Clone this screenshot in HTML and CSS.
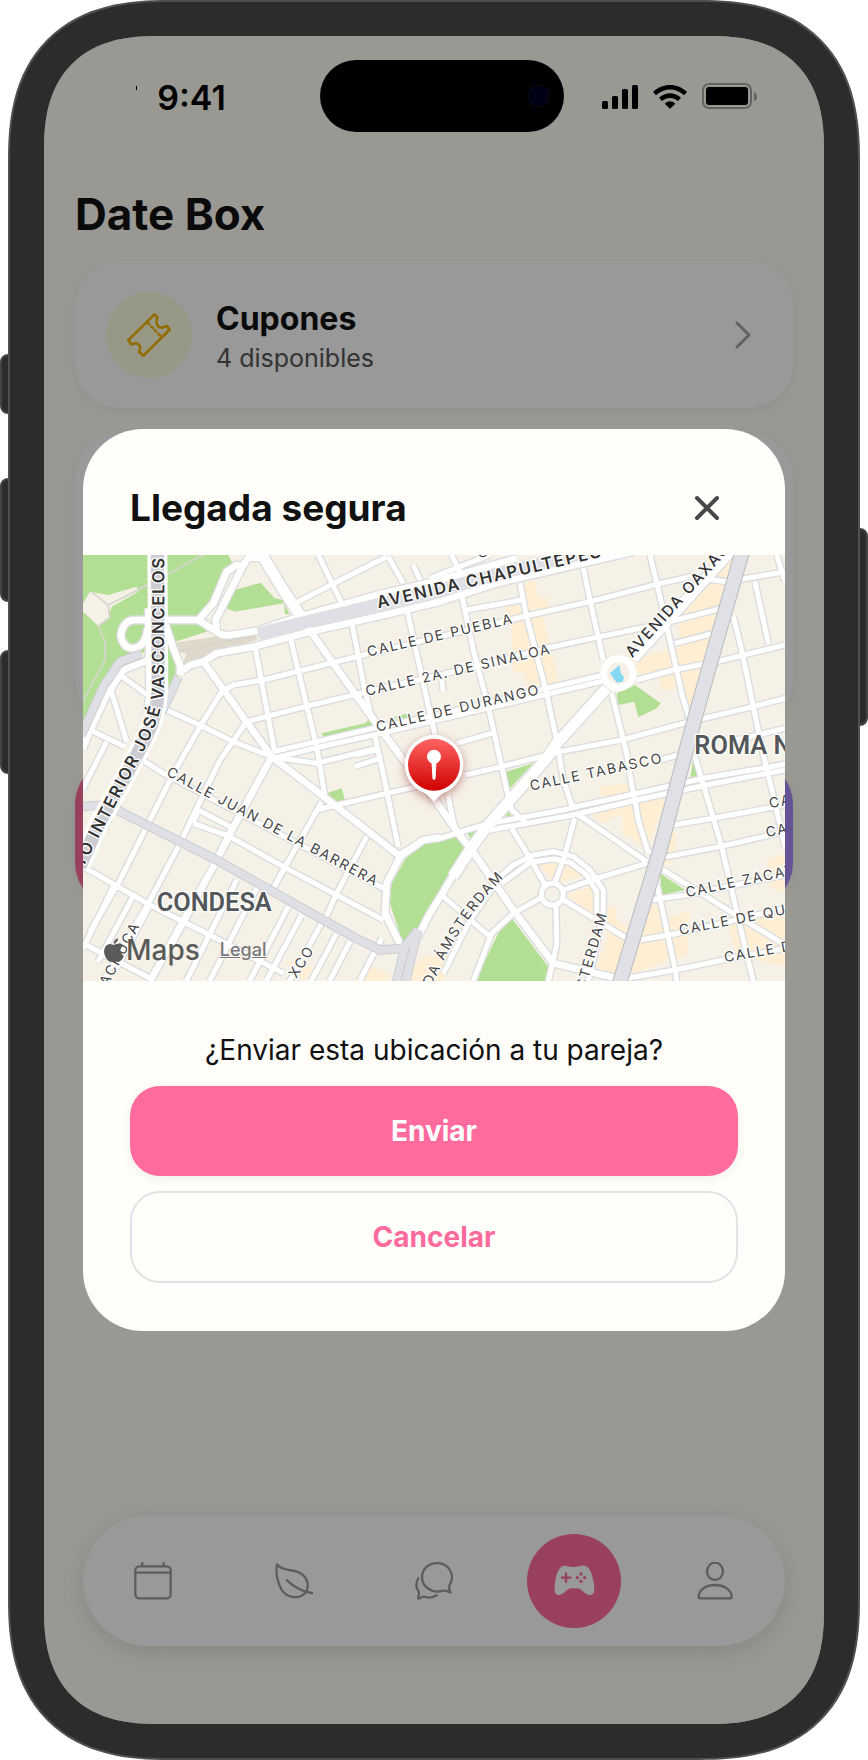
FILE: index.html
```
<!DOCTYPE html>
<html lang="es">

<head>
    <meta charset="UTF-8">
    <meta name="viewport" content="width=device-width, initial-scale=1.0">
    <title>Date Box</title>
    <link rel="stylesheet" href="styles.css">
</head>

<body>
    <div class="phone">
        <span class="side-button action"></span>
        <span class="side-button volume-up"></span>
        <span class="side-button volume-down"></span>
        <span class="side-button power"></span>

        <div class="screen">
            <header class="status-bar">
                <div class="time">9:41</div>
                <div class="island"><span class="camera"></span></div>
                <div class="status-icons">
                    <svg width="36" height="26" viewBox="0 0 36 26">
                        <rect x="0" y="18" width="6" height="8" rx="1.5" />
                        <rect x="10" y="13" width="6" height="13" rx="1.5" />
                        <rect x="20" y="6" width="6" height="20" rx="1.5" />
                        <rect x="30" y="2" width="6" height="24" rx="1.5" />
                    </svg>
                    <svg width="34" height="26" viewBox="0 0 102 78">
                        <path d="M0 27C28-1 74-1 102 27L93 37C68 14 34 14 9 37Z" />
                        <path d="M18 44C37 26 65 26 84 44L75 54C60 42 42 42 27 54Z" />
                        <path d="M35 62Q51 48 67 62L51 77Z" />
                    </svg>
                    <svg width="55" height="26" viewBox="0 0 55 26">
                        <rect x="1" y="1" width="48" height="24" rx="6" fill="none" stroke="#a6a6a3" stroke-width="2" />
                        <rect x="4" y="4" width="42" height="18" rx="3" />
                        <path d="M52 9Q55 10 55 14T52 18Z" fill="#a6a6a3" />
                    </svg>
                </div>
            </header>

            <main class="content">
                <h1>Date Box</h1>
                <a class="card coupon-card" href="#cupones">
                    <span class="card-icon">
                        <svg width="44" height="44" viewBox="380 938 133 133" fill="none" stroke="#f5b400" stroke-width="8" stroke-linejoin="round" stroke-linecap="round">
                            <path d="M463 942L472 952C466 964 470 975 477 980C484 985 493 981 500 977L509 988L430 1067L416 1055C423 1045 420 1036 414 1032C407 1028 399 1030 393 1033L384 1020Z" />
                            <path d="M441 966L447 972M454 979L458 983M464 990L468 994M475 1001L481 1007" />
                        </svg>
                    </span>
                    <span class="card-text">
                        <strong>Cupones</strong>
                        <small>4 disponibles</small>
                    </span>
                    <svg class="chevron" width="18" height="28" viewBox="0 0 18 28" fill="none" stroke="#a3a3a3" stroke-width="3" stroke-linecap="round" stroke-linejoin="round">
                        <path d="M3 2L15 14L3 26" />
                    </svg>
                </a>
                <div class="card tall-card"></div>
                <div class="card gradient-card"></div>
            </main>

            <nav class="tab-bar">
                <a href="#calendario" aria-label="Calendario">
                    <svg width="38" height="38" viewBox="193 245 114 114">
                        <rect x="197" y="258" width="106" height="96" rx="12" />
                        <path d="M197 277H303M218 248V257M282 248V257" />
                    </svg>
                </a>
                <a href="#bienestar" aria-label="Bienestar">
                    <svg width="38" height="38" viewBox="614 245 114 114">
                        <path d="M620 252C638 275 666 265 689 278C714 292 718 320 705 337C688 357 652 354 635 330C620 307 616 275 620 252Z" />
                        <path d="M650 300Q685 333 725 338" />
                    </svg>
                </a>
                <a href="#chat" aria-label="Chat">
                    <svg width="38" height="38" viewBox="1035 245 114 114">
                        <path d="M1141 336C1135 336 1128 327 1114 332C1084 340 1056 318 1056 291C1056 266 1076 248 1101 248C1127 248 1146 268 1146 291C1146 310 1136 312 1137 321C1137 328 1141 332 1141 336Z" />
                        <path d="M1045 294C1035 310 1040 325 1046 334C1050 342 1042 350 1045 355C1055 354 1055 346 1068 350C1080 354 1092 350 1100 345" />
                    </svg>
                </a>
                <a class="active" href="#juegos" aria-label="Juegos">
                    <svg width="41" height="31" viewBox="344 256 123 93">
                        <path class="pad" d="M375 258C385 258 392 262 405 262C418 262 425 257 435 258C452 260 460 285 464 315C467 340 463 347 450 346C435 345 430 326 412 326H398C380 326 376 345 360 346C346 347 344 335 347 310C350 285 358 260 375 258Z" />
                        <path class="pad-cross" d="M368 294H393M380 282V306" />
                        <g class="pad-dots">
                            <circle cx="425" cy="283" r="5" />
                            <circle cx="425" cy="305" r="5" />
                            <circle cx="414" cy="294" r="5" />
                            <circle cx="436" cy="294" r="5" />
                        </g>
                    </svg>
                </a>
                <a href="#perfil" aria-label="Perfil">
                    <svg width="38" height="38" viewBox="769 245 114 114">
                        <ellipse cx="826" cy="273" rx="24" ry="26" />
                        <path d="M777 350C777 326 802 314 826 314C850 314 876 326 876 350Q876 354 872 354H781Q777 354 777 350Z" />
                    </svg>
                </a>
            </nav>

            <div class="overlay">
                <section class="modal" role="dialog" aria-labelledby="modalTitle">
                    <div class="modal-header">
                        <h2 id="modalTitle">Llegada segura</h2>
                        <button class="close-button" type="button" aria-label="Cerrar">
                            <svg width="26" height="26" viewBox="0 0 26 26" fill="none" stroke="#484848" stroke-width="4" stroke-linecap="round">
                                <path d="M3 3L23 23M23 3L3 23" />
                            </svg>
                        </button>
                    </div>

                    <div class="map">
                        <svg class="map-drawing" viewBox="0 0 2106 1278" preserveAspectRatio="xMidYMid slice">
                            <defs>
                                <!-- calles secundarias -->
                                <g id="streets">
                                    <path d="M636 145L911 5M706 0L781 155M806 200L841 385L861 470M876 545L896 635L946 875" />
                                    <path d="M916 5L961 85M971 160L1041 475L1061 560M991 30L1011 75M1106 0L1136 65M1041 70L1131 35L1220 0" />
                                    <path d="M416 410L451 390L541 375L821 305L1071 245L1341 180L1521 140L1721 88L1821 65L1931 80L2106 50" />
                                    <path d="M491 500L666 455L811 420L1071 360L1411 275L1551 245L1741 205L1916 160" />
                                    <path d="M571 590L701 560L881 518L1071 478L1391 400L1561 360" />
                                    <path d="M571 610L701 578L881 538L1071 493L1391 418L1561 378" />
                                    <path d="M1661 375L1771 345L1901 320L2106 270M1776 265L1891 235M1151 165L1316 135M1076 375L1081 410" />
                                    <path d="M701 765L911 715L1001 695M1146 660L1256 635L1431 590L1616 555L1821 500L2011 455L2106 430" />
                                    <path d="M1121 565L1226 535M1731 615L1786 600M1960 555L2106 520M816 600L880 585M816 635L890 610" />
                                    <path d="M946 900L1021 855L1071 850L1151 825L1221 805L1441 765L1481 755L1641 720L1861 670L2106 628" />
                                    <path d="M1221 825L1471 780L1661 735L1871 690L2106 645" />
                                    <path d="M1771 810L1891 790L2106 750M1701 890L1751 905L1911 875L2106 830M1701 1035L1811 1020L2106 960" />
                                    <path d="M1671 1155L1786 1135L2106 1060M1631 1270L1776 1245L1921 1215L2106 1180" />
                                    <path d="M1481 775L1691 920M1741 945L1871 1025L1951 1075L2106 1170" />
                                    <path d="M1721 985L1776 1240L1781 1278M1836 605L1891 790L1916 875L1981 1155L2011 1278" />
                                    <path d="M1951 185L1976 285L2011 455L2041 600L2061 680L2106 875M2016 80L2056 265M2081 0L2106 80" />
                                    <path d="M1701 0L1731 125L1781 345L1796 415L1821 500M1501 40L1521 135L1561 315" />
                                    <path d="M1586 415L1631 595L1646 690L1656 735L1666 795L1696 895" />
                                    <path d="M1311 85L1331 185L1386 395L1421 555L1441 675L1466 750L1486 758" />
                                    <path d="M1136 120L1171 285L1216 455L1256 635L1271 705L1286 765L1331 805" />
                                    <path d="M1095 720L1115 820" />
                                    <path d="M1081 1255L1156 1105L1251 965L1291 930L1351 900L1411 890L1471 905L1521 945L1561 1005L1561 1065L1531 1215L1515 1278" />
                                    <path d="M1256 985L1341 922L1411 912L1461 922L1511 960L1541 1010L1541 1075" />
                                    <path d="M1386 990L1341 910L1286 820M1415 985L1446 900L1475 790M1441 1005L1541 970L1691 925M1441 1035L1541 1095L1631 1150" />
                                    <path d="M1419 1055L1421 1165L1411 1215L1396 1278M1371 1030L1291 1075L1226 1135L1171 1278M1081 1025L1221 1145" />
                                    <circle cx="1408" cy="1018" r="33" />
                                    <path d="M516 275L575 590M621 245L701 575L726 725M251 465L361 515L451 560L566 605M111 360L201 425" />
                                    <path d="M416 410L351 515L271 655L191 815L106 985L21 1130M491 500L411 615L286 875L196 1045L60 1278" />
                                    <path d="M716 740L601 945L571 1000M851 845L761 1015L721 1105M261 1180L441 845" />
                                    <path d="M0 935L201 1050L361 1130L601 1255M0 1165L211 1275M331 805L441 845L601 935L901 1095M346 765L441 815M331 805L346 765" />
                                    <path d="M171 610L241 655L901 1000M566 605L700 625L881 580" />
                                    <path d="M461 975L310 1278M521 1000L380 1278M616 1055L500 1278M656 1080L550 1278M716 1105L620 1278M761 1135L685 1278M801 1160L740 1278" />
                                    <path d="M96 985L0 1180M155 1015L45 1220M81 395L131 560M21 525L126 575M71 560L0 700M201 1050L100 1240" />
                                    <path d="M896 1150L830 1278" />
                                </g>
                                <!-- avenidas y rampas -->
                                <g id="avenues">
                                    <path d="M196 195H151Q121 198 113 240Q120 280 150 280Q190 275 193 220" />
                                    <path d="M196 195H346L401 230Q415 242 441 240L521 228L651 185L881 120L1071 75L1300 10" />
                                    <path d="M346 195L391 145L431 50L461 30L481 35M401 225L398 195L481 30L496 8H531" />
                                    <path d="M296 350L321 330L361 320L401 295L511 275L681 230L881 185L1071 140L1241 85L1650 -10" />
                                    <path d="M361 320L566 605L761 755L946 900" />
                                    <path d="M566 605L441 835L391 935L201 1278" />
                                    <path d="M651 185L851 465L950 600L1056 735L1126 835L1166 885L1291 1065L1411 1225L1601 1270" />
                                    <path d="M1071 848L1021 855L951 905L911 985L906 1075L955 1175M1115 955L1041 1075L1005 1145" />
                                    <path d="M246 205L271 280L291 330V360M196 315L121 345L71 420L15 540L0 580M196 160L200 420L190 480" />
                                </g>
                                <g id="wide">
                                    <path d="M531 -10L601 105L651 180" />
                                    <path d="M1941 -10L1651 310M1571 400L1421 565L1391 610L1211 815L1161 885L1110 965" />
                                </g>
                                <g id="highways">
                                    <path d="M1978 -10L1906 240L1841 470L1795 640L1731 885L1608 1290" />
                                </g>
                                <g id="trunks">
                                    <path d="M-10 755L95 748L111 770L401 915L561 1005L721 1095L820 1150L891 1185L961 1180L1005 1125" />
                                    <path d="M965 1180L938 1290M176 297L111 320L61 395L-5 540M286 365L251 440L171 600L20 900M1005 1125L965 1290" />
                                </g>
                                <path id="vasconcelosLine" d="M-220 1390L20 900L160 630Q238 490 243 400L244 4" />
                                <path id="amsterdamLine" d="M900 1600L1090 1200Q1160 1070 1265 965" />
                            </defs>

                            <rect class="land" width="2106" height="1278" />
                            <g class="park">
                                <path d="M0 0H436L451 30L411 85L346 195L371 230L261 265L300 330L260 420L196 285L111 325L61 395L0 515Z" />
                                <path d="M431 160L456 105L533 83L575 130L601 135V145L456 170ZM603 145L620 178H606Z" />
                                <path d="M1601 415L1656 390L1733 445L1721 460L1666 487L1654 440L1606 450Z" />
                                <path d="M1121 840L1146 885L1091 965L1041 1055L1010 1120L961 1170L921 1045L926 985L971 905L1021 865L1071 855Z" />
                                <path d="M1286 1090L1396 1235L1386 1278H1176L1246 1135Z" />
                                <path d="M1271 650L1351 625L1276 705ZM1151 832L1211 820L1171 865ZM1821 675L1831 610L1851 670ZM1731 955L1806 1005L1736 1020ZM1275 770L1291 790H1266Z" />
                                <path d="M716 535L846 505L866 485V515L721 550ZM731 715L776 700L786 735L706 760ZM925 490L975 475V490ZM965 1190L995 1180L970 1215Z" />
                            </g>
                            <path class="land" d="M0 145L21 110L76 120L161 95L166 110L86 155L76 190L46 213L0 170Z" />
                            <path class="park-path" d="M25 110L76 150L165 105L190 90M165 105L360 0M76 150L80 188L46 213L66 260V315L0 440" />
                            <path class="rail" d="M261 265L521 228V255L391 290L340 330L296 340L310 295L262 290Z" />
                            <path class="rail-line" d="M290 290L521 240" />
                            <g class="shops">
                                <path d="M1326 80H1356L1366 130L1396 127L1401 155L1381 185L1426 380L1331 395L1326 355L1291 350L1286 225L1266 155L1316 150Z" />
                                <path d="M1941 5L1950 30L1821 460L1801 405H1730L1728 365L1665 358L1655 310L1790 275L1786 195Z" />
                                <path d="M1551 695L1641 685L1656 735L1756 715L1691 885L1641 845H1621L1616 775L1561 805L1521 775L1560 760Z" />
                                <path d="M1731 835H1781L1771 915L1731 940ZM1361 925L1411 915L1505 960L1415 985ZM1451 1020L1531 990L1536 1085Z" />
                                <path d="M1571 1055H1601V1095L1631 1115L1681 1045L1731 1055L1741 1095L1821 1065L1811 1205L1761 1215L1600 1278L1541 1235L1571 1155Z" />
                                <path d="M2051 915L2106 895V1010L2061 1000ZM1931 1095L2106 1055V1235L1961 1200ZM1021 1205L1100 1195L1081 1278H950ZM811 1278L850 1225L921 1260V1278ZM601 1212L691 1240L661 1278Z" />
                            </g>

                            <use href="#streets" class="road street-edge" />
                            <use href="#avenues" class="road avenue-edge" />
                            <use href="#wide" class="road wide-edge" />
                            <use href="#streets" class="road street" />
                            <use href="#avenues" class="road avenue" />
                            <use href="#wide" class="road wide" />
                            <circle class="roundabout" cx="1606" cy="355" r="44" />
                            <path class="water" d="M1581 355L1609 330L1613 353L1623 367L1619 380L1601 383Z" />
                            <use href="#trunks" class="road trunk-edge" />
                            <use href="#trunks" class="road trunk" />
                            <use href="#highways" class="road highway-edge" />
                            <use href="#highways" class="road highway" />
                            <path class="road chapultepec" d="M525 236L651 205L881 150L1071 105L1291 45L1541 -15" />
                            <path class="road vasconcelos-edge" d="M223 -10L226 405Q222 480 190 545L130 660L51 800L-10 935" />
                            <path class="road vasconcelos" d="M223 -10L226 405Q222 480 190 545L130 660L51 800L-10 935" />

                            <g class="label">
                                <text transform="translate(856 305) rotate(-13)">CALLE DE PUEBLA</text>
                                <text transform="translate(851 423) rotate(-13)">CALLE 2A. DE SINALOA</text>
                                <text transform="translate(883 530) rotate(-13)">CALLE DE DURANGO</text>
                                <text transform="translate(1344 707) rotate(-12)">CALLE TABASCO</text>
                                <text transform="translate(248 660) rotate(28)">CALLE JUAN DE LA BARRERA</text>
                                <text transform="translate(1811 1027) rotate(-12)">CALLE ZACATECAS</text>
                                <text transform="translate(1791 1140) rotate(-11)">CALLE DE QUERÉTARO</text>
                                <text transform="translate(1926 1222) rotate(-10)">CALLE DURANGO</text>
                                <text transform="translate(2061 760) rotate(-11)">CALLE</text>
                                <text transform="translate(2051 847) rotate(-11)">CALLE</text>
                                <text transform="translate(1190 12) rotate(-25)">CALLE</text>
                                <text transform="translate(640 1272) rotate(-58)">XCO</text>
                                <text transform="translate(172 1110) rotate(-62)" text-anchor="end">PACHUCA</text>
                                <text transform="translate(1573 1075) rotate(-74)" text-anchor="end">AVENIDA ÁMSTERDAM</text>
                                <text text-anchor="end"><textPath href="#amsterdamLine" startOffset="100%">AVENIDA ÁMSTERDAM</textPath></text>
                            </g>
                            <g class="label label-avenue">
                                <text transform="translate(886 160) rotate(-13)">AVENIDA CHAPULTEPEC</text>
                                <text text-anchor="end"><textPath href="#vasconcelosLine" startOffset="100%">CIRCUITO INTERIOR JOSÉ VASCONCELOS</textPath></text>
                            </g>
                            <g class="label label-diagonal">
                                <text transform="translate(1648 310) rotate(-48)">AVENIDA OAXACA</text>
                            </g>
                            <g class="label label-district">
                                <text x="221" y="1068">CONDESA</text>
                                <text x="1834" y="597">ROMA NORTE</text>
                            </g>
                        </svg>

                        <svg class="pin" width="84" height="92" viewBox="0 0 84 92">
                            <defs>
                                <linearGradient id="pinRed" x1="0" y1="0" x2="0" y2="1">
                                    <stop offset="0" stop-color="#ff6464" />
                                    <stop offset="1" stop-color="#d00000" />
                                </linearGradient>
                            </defs>
                            <path d="M42 9A30 30 0 0 1 52 67Q48 69 42 76Q36 69 32 67A30 30 0 0 1 42 9Z" fill="#fff" />
                            <circle cx="42" cy="39" r="26" fill="url(#pinRed)" />
                            <circle cx="42" cy="31" r="7" fill="#fff" />
                            <path d="M40 37H44L43 53Q42 55 41 53Z" fill="#fff" stroke="#fff" />
                        </svg>

                        <div class="map-credit">
                            <svg width="20" height="24" viewBox="0 0 20 24">
                                <path d="M14 0Q14 4 10 6Q9 2 14 0ZM10 7Q13 5 16 6Q18 7 19 8Q15 11 17 15Q18 17 20 18Q18 22 15 24Q13 24 10 23Q7 24 6 24Q0 20 0 13Q1 6 6 6Z" />
                            </svg>
                            <span>Maps</span>
                            <a href="#legal">Legal</a>
                        </div>
                    </div>

                    <div class="modal-body">
                        <p>¿Enviar esta ubicación a tu pareja?</p>
                        <button class="btn btn-primary" type="button">Enviar</button>
                        <button class="btn btn-outline" type="button">Cancelar</button>
                    </div>
                </section>
            </div>
        </div>
    </div>
</body>

</html>
```
FILE: styles.css
```
* {
    box-sizing: border-box;
}

body {
    margin: 0;
    padding: 0 8px;
    background-color: #fff;
    font-family: Inter, "Liberation Sans", sans-serif;
    color: #111;
}

h1,
h2,
p {
    margin: 0;
}

/* Marco del teléfono */
.phone {
    position: relative;
    display: flex;
    min-height: 100vh;
    padding: 34px;
    border: 2px solid #505050;
    border-radius: 140px;
    background-color: #2c2c2c;
}

.side-button {
    position: absolute;
    z-index: -1;
    left: -10px;
    width: 20px;
    border: 2px solid #444;
    border-radius: 8px;
    background-color: #2c2c2c;
}

.action {
    top: 352px;
    height: 60px;
}

.volume-up {
    top: 476px;
    height: 124px;
}

.volume-down {
    top: 648px;
    height: 124px;
}

.power {
    top: 526px;
    right: -10px;
    left: auto;
    height: 198px;
}

.screen {
    position: relative;
    display: flex;
    flex: 1;
    flex-direction: column;
    border-radius: 96px;
    overflow: hidden;
    background-color: #fffef5;
}

@supports (corner-shape: squircle) {
    .phone {
        border-radius: 160px;
        corner-shape: superellipse(1.3);
    }

    .screen {
        border-radius: 114px;
        corner-shape: superellipse(1.3);
    }
}

/* Barra de estado */
.status-bar {
    display: grid;
    grid-template-columns: minmax(0, 1fr) 244px minmax(0, 1fr);
    align-items: center;
    padding: 24px 0 0 16px;
}

.time {
    padding: 2px 18px 0 0;
    text-align: center;
    font-size: 34px;
    font-weight: 600;
    color: #000;
}

.time::before {
    content: "";
    display: inline-block;
    width: 1px;
    height: 4px;
    margin-right: 20px;
    vertical-align: 20px;
    background-color: #000;
}

.island {
    display: flex;
    align-items: center;
    justify-content: flex-end;
    height: 72px;
    padding-right: 14px;
    border-radius: 36px;
    background-color: #000;
}

.camera {
    width: 22px;
    height: 22px;
    border: 1px solid #14142c;
    border-radius: 50%;
    background-color: #000024;
}

.status-icons {
    display: flex;
    gap: 15px;
    padding-left: 38px;
}

/* Contenido */
.content {
    display: flex;
    flex-direction: column;
    gap: 21px;
    padding: 56px 31px 0;
}

h1 {
    font-size: 44px;
    font-weight: 700;
    line-height: 52px;
}

.card {
    border-radius: 44px;
    background-color: #fff;
    box-shadow: 0 3px 12px rgba(0, 0, 0, 0.06);
}

.coupon-card {
    display: flex;
    align-items: center;
    gap: 24px;
    height: 147px;
    padding: 0 31px;
    color: #111;
    text-decoration: none;
}

.card-icon {
    display: flex;
    align-items: center;
    justify-content: center;
    width: 86px;
    height: 86px;
    border-radius: 50%;
    background-color: #fdfde2;
}

.card-text {
    display: flex;
    flex: 1;
    flex-direction: column;
    gap: 4px;
    padding-top: 2px;
}

.card-text strong {
    font-size: 32px;
    font-weight: 700;
    line-height: 40px;
}

.card-text small {
    font-size: 25px;
    line-height: 30px;
    color: #555;
}

.chevron {
    margin-right: 10px;
}

.tall-card {
    height: 291px;
    margin-top: 4px;
}

.gradient-card {
    height: 147px;
    margin-top: 15px;
    background: linear-gradient(90deg, #ff6b9d, #a78bfa);
}

/* Navegación inferior */
.tab-bar {
    display: grid;
    grid-template-columns: repeat(5, 1fr);
    align-items: center;
    justify-items: center;
    height: 131px;
    margin: auto 39px 78px;
    border-radius: 66px;
    background-color: #fff;
    box-shadow: 0 6px 24px rgba(0, 0, 0, 0.12);
}

.tab-bar a {
    display: flex;
    align-items: center;
    justify-content: center;
    width: 94px;
    height: 94px;
    border-radius: 50%;
}

.tab-bar svg {
    fill: none;
    stroke: #9c9c9c;
    stroke-width: 7;
    stroke-linecap: round;
    stroke-linejoin: round;
}

.tab-bar .active {
    background-color: #ff6b9d;
}

.tab-bar .pad {
    fill: #fff;
    stroke: none;
}

.tab-bar .pad-cross {
    stroke: #ff6b9d;
}

.tab-bar .pad-dots {
    fill: #ff6b9d;
    stroke: none;
}

/* Ventana modal */
.overlay {
    position: absolute;
    inset: 0;
    display: flex;
    align-items: center;
    padding: 0 39px;
    background-color: rgba(0, 0, 0, 0.4);
}

.modal {
    flex: 1;
    border-radius: 60px;
    overflow: hidden;
    background-color: #fffefa;
}

.modal-header {
    display: flex;
    align-items: center;
    justify-content: space-between;
    padding: 56px 47px 24px;
}

h2 {
    font-size: 37px;
    font-weight: 700;
    line-height: 46px;
}

.close-button {
    display: flex;
    padding: 10px;
    margin-right: 8px;
    border: none;
    background: none;
    cursor: pointer;
}

.modal-body {
    display: flex;
    flex-direction: column;
    gap: 15px;
    padding: 48px 47px;
}

.modal-body p {
    text-align: center;
    font-size: 28px;
    line-height: 42px;
}

.btn {
    border: none;
    border-radius: 30px;
    font-family: inherit;
    font-size: 28px;
    font-weight: 700;
    cursor: pointer;
}

.btn-primary {
    height: 90px;
    background-color: #ff6b9d;
    color: #fff;
    box-shadow: 0 3px 12px rgba(0, 0, 0, 0.06);
}

.btn-outline {
    height: 92px;
    border: 2px solid #e3e3e5;
    background-color: transparent;
    color: #ff6b9d;
}

/* Mapa */
.map {
    position: relative;
    aspect-ratio: 702 / 426;
    overflow: hidden;
}

.map-drawing {
    display: block;
    width: 100%;
    height: 100%;
}

.land {
    fill: #f5f1e7;
}

.park {
    fill: #b3df94;
}

.park-path {
    fill: none;
    stroke: #d5d5cd;
    stroke-width: 5;
}

.rail {
    fill: #dfd9cb;
}

.rail-line {
    stroke: #c9c8c6;
    stroke-width: 7;
    stroke-dasharray: 3 9;
}

.shops {
    fill: #feefd4;
}

.water {
    fill: #85d7f3;
}

.road {
    fill: none;
    stroke-linejoin: round;
}

.street-edge {
    stroke: #dbdcde;
    stroke-width: 23;
}

.street {
    stroke: #fff;
    stroke-width: 15;
}

.avenue-edge {
    stroke: #dbdcde;
    stroke-width: 28;
}

.avenue {
    stroke: #fff;
    stroke-width: 20;
}

.wide-edge {
    stroke: #dbdcde;
    stroke-width: 40;
}

.wide {
    stroke: #fff;
    stroke-width: 32;
}

.roundabout {
    fill: #f5f1e7;
    stroke: #fff;
    stroke-width: 20;
}

.trunk-edge {
    stroke: #c8c9cd;
    stroke-width: 28;
}

.trunk {
    stroke: #dfe0e5;
    stroke-width: 23;
}

.highway-edge {
    stroke: #b9babe;
    stroke-width: 46;
}

.highway {
    stroke: #e0e1e6;
    stroke-width: 40;
}

.chapultepec {
    stroke: #dfe0e5;
    stroke-width: 38;
}

.vasconcelos-edge {
    stroke: #fff;
    stroke-width: 60;
}

.vasconcelos {
    stroke: #cccdd2;
    stroke-width: 40;
}

.label {
    font-size: 42px;
    letter-spacing: 5px;
    fill: #444;
    stroke: #fff;
    stroke-width: 8px;
    stroke-linejoin: round;
    paint-order: stroke;
}

.label-avenue {
    font-size: 50px;
    font-weight: 600;
    fill: #333;
}

.label-diagonal {
    font-size: 46px;
    font-weight: 500;
    fill: #333;
}

.label-district {
    font-family: Roboto, "Liberation Sans", sans-serif;
    font-size: 76px;
    font-weight: 600;
    letter-spacing: 0;
    fill: #54585a;
}

.pin {
    position: absolute;
    top: 50%;
    left: 50%;
    transform: translate(-50%, -46%);
    filter: drop-shadow(0 3px 5px rgba(120, 0, 0, 0.4));
}

.map-credit {
    position: absolute;
    bottom: 14px;
    left: 21px;
    display: flex;
    align-items: center;
    font-size: 28px;
    font-weight: 500;
    line-height: 34px;
    color: #5a5a58;
    text-shadow: 0 0 2px #fff;
}

.map-credit svg {
    margin-right: 2px;
    fill: #5a5a58;
}

.map-credit a {
    margin-left: 20px;
    font-size: 18px;
    color: #777;
}
```
